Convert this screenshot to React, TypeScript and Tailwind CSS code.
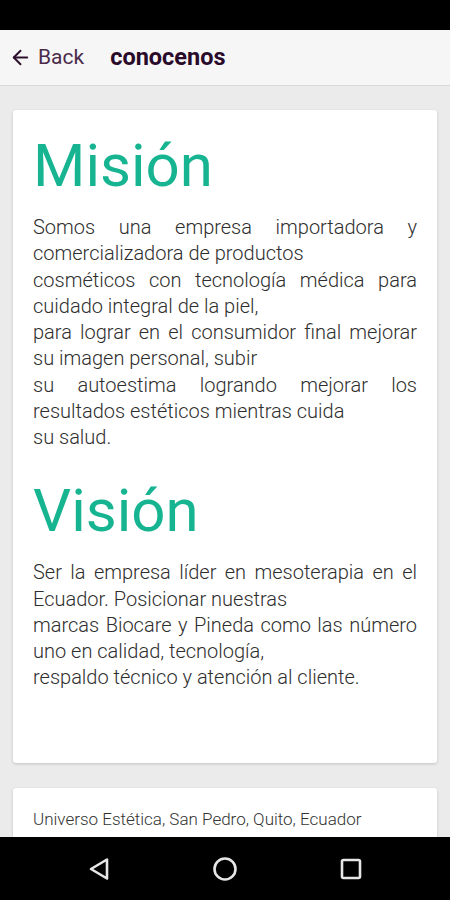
import { ArrowLeft } from "lucide-react";

const mision = [
    "Somos una empresa importadora y comercializadora de productos",
    "cosméticos con tecnología médica para cuidado integral de la piel,",
    "para lograr en el consumidor final mejorar su imagen personal, subir",
    "su autoestima logrando mejorar los resultados estéticos mientras cuida",
    "su salud.",
];

const vision = [
    "Ser la empresa líder en mesoterapia en el Ecuador. Posicionar nuestras",
    "marcas Biocare y Pineda como las número uno en calidad, tecnología,",
    "respaldo técnico y atención al cliente.",
];

const Section = ({ title, lines, first }: { title: string; lines: string[]; first?: boolean }) => (
    <div className={first ? "" : "mt-[25px]"}>
        <h2 className="text-[60px] leading-[72px] font-normal text-[#17b491]">{title}</h2>
        <div className="mt-[12px] text-[20px] leading-[26.25px] font-light text-[#2e2e2e]">
            {lines.map((line) => (
                <p key={line} className="text-justify [text-align-last:left]">
                    {line}
                </p>
            ))}
        </div>
    </div>
);

const App = () => {
    return (
        <div className="w-[450px] h-[900px] flex flex-col bg-[#ebebeb] overflow-hidden font-['Roboto','Noto_Sans',sans-serif]">
            <div className="h-[30px] bg-black shrink-0" />
            <div className="h-[56px] shrink-0 bg-[#f6f6f6] border-b border-[#d9d9d9] flex items-center">
                <div className="flex items-center pl-[9px] text-[#4a2a4a]">
                    <ArrowLeft size={23} strokeWidth={2} className="text-[#2b0f2b]" />
                    <span className="ml-[6px] text-[21px]">Back</span>
                </div>
                <span className="ml-[26px] text-[23.5px] font-bold text-[#2a0a2a]">conocenos</span>
            </div>
            <div className="flex-1 overflow-hidden px-[13px] pt-[24px]">
                <div className="bg-white rounded-[3px] shadow-[0_1px_3px_rgba(0,0,0,0.18)] px-5 pt-5 pb-[72px]">
                    <Section title="Misión" lines={mision} first />
                    <Section title="Visión" lines={vision} />
                </div>
                <div className="mt-[25px] bg-white rounded-[3px] shadow-[0_1px_3px_rgba(0,0,0,0.18)] px-5 pt-[20px] pb-5">
                    <p className="text-[17px] leading-[22px] font-light text-[#333]">Universo Estética, San Pedro, Quito, Ecuador</p>
                </div>
            </div>
            <div className="h-[63px] shrink-0 bg-black flex items-center justify-between px-[88px]">
                <svg width="22" height="24" viewBox="0 0 22 24" fill="none" stroke="#e6e6e6" strokeWidth="2.6" strokeLinejoin="round">
                    <path d="M19 2.5 L3 12 L19 21.5 Z" />
                </svg>
                <svg width="26" height="26" viewBox="0 0 26 26" fill="none" stroke="#e6e6e6" strokeWidth="2.6">
                    <circle cx="13" cy="13" r="10.5" />
                </svg>
                <svg width="22" height="22" viewBox="0 0 22 22" fill="none" stroke="#e6e6e6" strokeWidth="2.6">
                    <rect x="2" y="2" width="18" height="18" rx="1.5" />
                </svg>
            </div>
        </div>
    );
};

export default App;
